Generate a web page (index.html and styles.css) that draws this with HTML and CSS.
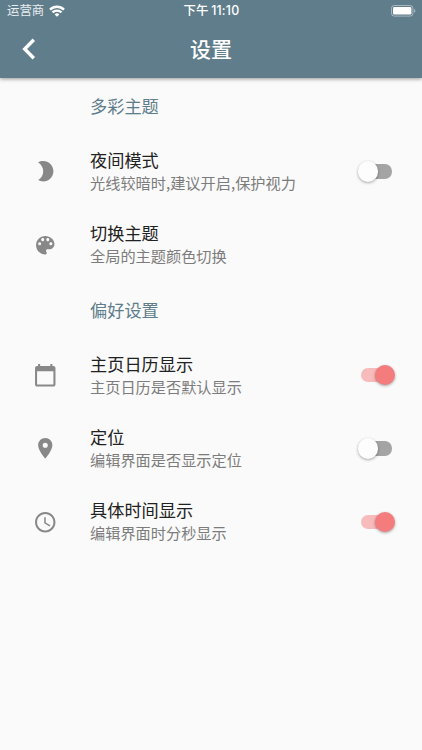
FILE: index.html
```html
<!DOCTYPE html>
<html lang="zh-CN">
<head>
<meta charset="utf-8">
<title>设置</title>
<link rel="stylesheet" href="styles.css">
</head>
<body>
<header class="appbar">
  <div class="status">
    <div class="carrier"><span>运营商</span>
      <svg class="wifi" viewBox="0 0 16 12"><g fill="none" stroke="#fff" stroke-width="2.3"><path d="M1 4.6a10 10 0 0 1 14 0"/><path d="M3.5 7.4a6.4 6.4 0 0 1 9 0"/></g><path fill="#fff" d="M5.6 9.4a3.5 3.5 0 0 1 4.8 0L8 11.8z"/></svg>
    </div>
    <div class="time">下午 <b>11:10</b></div>
    <svg class="battery" viewBox="0 0 25 12"><rect x=".5" y=".5" width="21.4" height="10.6" rx="2.8" fill="none" stroke="#fff" stroke-opacity=".45"/><rect x="2" y="2" width="18.4" height="7.6" rx="1.4" fill="#fff"/><path d="M23.2 4v3.8c1.6-.7 1.6-3.1 0-3.8z" fill="#fff" fill-opacity=".5"/></svg>
  </div>
  <div class="toolbar">
    <svg class="back" viewBox="0 0 14 22"><path d="M11.8 1.7 2.7 11l9.1 9.3" fill="none" stroke="#fff" stroke-width="3.4"/></svg>
    <h1>设置</h1>
  </div>
</header>
<main>
  <h2>多彩主题</h2>
  <div class="row">
    <svg class="icon" viewBox="0 0 24 24"><path d="M10 2c-1.82 0-3.53.5-5 1.35C7.99 5.08 10 8.3 10 12s-2.01 6.92-5 8.65C6.47 21.5 8.18 22 10 22c5.52 0 10-4.48 10-10S15.52 2 10 2z"/></svg>
    <div class="text"><div class="title">夜间模式</div><div class="sub">光线较暗时,建议开启,保护视力</div></div>
    <div class="switch"></div>
  </div>
  <div class="row">
    <svg class="icon" viewBox="0 0 24 24"><path d="M12 3c-4.97 0-9 4.03-9 9s4.03 9 9 9c.83 0 1.5-.67 1.5-1.5 0-.39-.15-.74-.39-1.01-.23-.26-.38-.61-.38-.99 0-.83.67-1.5 1.5-1.5H16c2.76 0 5-2.24 5-5 0-4.42-4.03-8-9-8zm-5.5 9c-.83 0-1.5-.67-1.5-1.5S5.67 9 6.5 9 8 9.67 8 10.5 7.33 12 6.5 12zm3-4C8.67 8 8 7.33 8 6.5S8.67 5 9.5 5s1.5.67 1.5 1.5S10.33 8 9.5 8zm5 0c-.83 0-1.5-.67-1.5-1.5S13.67 5 14.5 5s1.5.67 1.5 1.5S15.33 8 14.5 8zm3 4c-.83 0-1.5-.67-1.5-1.5S16.67 9 17.5 9s1.5.67 1.5 1.5-.67 1.5-1.5 1.5z"/></svg>
    <div class="text"><div class="title">切换主题</div><div class="sub">全局的主题颜色切换</div></div>
  </div>
  <h2>偏好设置</h2>
  <div class="row">
    <svg class="icon" viewBox="0 0 24 24"><path d="M20 3h-1V1h-2v2H7V1H5v2H4c-1.1 0-2 .9-2 2v16c0 1.1.9 2 2 2h16c1.1 0 2-.9 2-2V5c0-1.1-.9-2-2-2zm0 18H4V8h16v13z"/></svg>
    <div class="text"><div class="title">主页日历显示</div><div class="sub">主页日历是否默认显示</div></div>
    <div class="switch on"></div>
  </div>
  <div class="row">
    <svg class="icon" viewBox="0 0 24 24"><path d="M12 2C8.13 2 5 5.13 5 9c0 5.25 7 13 7 13s7-7.75 7-13c0-3.87-3.13-7-7-7zm0 9.5a2.5 2.5 0 0 1 0-5 2.5 2.5 0 0 1 0 5z"/></svg>
    <div class="text"><div class="title">定位</div><div class="sub">编辑界面是否显示定位</div></div>
    <div class="switch"></div>
  </div>
  <div class="row">
    <svg class="icon" viewBox="0 0 24 24"><path d="M11.99 2C6.47 2 2 6.48 2 12s4.47 10 9.99 10C17.52 22 22 17.52 22 12S17.52 2 11.99 2zM12 20c-4.42 0-8-3.58-8-8s3.58-8 8-8 8 3.58 8 8-3.58 8-8 8zm.5-13H11v6l5.25 3.15.75-1.23-4.5-2.67z"/></svg>
    <div class="text"><div class="title">具体时间显示</div><div class="sub">编辑界面时分秒显示</div></div>
    <div class="switch on"></div>
  </div>
</main>
</body>
</html>
```
FILE: styles.css
```css
* { box-sizing: border-box; }
body {
  margin: 0;
  height: 750px;
  overflow: hidden;
  background: #fafafa;
  font-family: "Noto Sans CJK SC", sans-serif;
}
.appbar {
  position: relative;
  height: 78px;
  background: #607d8b;
  color: #fff;
  box-shadow: 0 1px 4px rgba(0, 0, 0, .4);
}
.status {
  display: grid;
  grid-template-columns: 1fr auto 1fr;
  align-items: center;
  height: 21px;
  padding: 0 6px 0 7px;
  font-size: 12.4px;
  line-height: 21px;
}
.carrier { display: flex; align-items: center; gap: 5px; color: #e9eef0; }
.wifi { width: 16px; height: 12px; }
.time { font-weight: 500; }
.time b { font-family: Inter, sans-serif; font-weight: 500; font-size: 12.4px; letter-spacing: .2px; }
.battery { width: 25px; height: 12px; justify-self: end; }
.toolbar {
  display: grid;
  grid-template-columns: 60px 1fr 60px;
  align-items: center;
  height: 56px;
}
.back { width: 14px; height: 22px; margin-left: 22px; }
h1 { margin: 0; padding-bottom: 2px; text-align: center; font-size: 21px; font-weight: 500; line-height: 30px; }
h2 {
  margin: 0;
  height: 57px;
  padding-left: 90px;
  color: #607d8b;
  font-size: 17.2px;
  font-weight: 400;
  line-height: 55px;
}
.row {
  display: flex;
  align-items: center;
  height: 73.3px;
  padding: 0 30px 0 33px;
}
.icon { width: 24.5px; height: 24.5px; margin-right: 32.5px; fill: #888; }
.text { flex: 1; padding-bottom: 1px; }
.title { color: #212121; font-size: 17.2px; line-height: 22px; }
.sub { color: #7c7c7c; font-size: 15.2px; line-height: 22px; }
.switch {
  position: relative;
  width: 31px;
  height: 14.4px;
  border-radius: 7.2px;
  background: #a4a4a4;
}
.switch::after {
  content: "";
  position: absolute;
  left: -3px;
  top: -3px;
  width: 20.4px;
  height: 20.4px;
  border-radius: 50%;
  background: #fdfdfd;
  box-shadow: 0 1px 3px rgba(0, 0, 0, .35);
}
.switch.on { background: #f8bbbb; }
.switch.on::after { left: 13.6px; background: #f47c7c; }
```
